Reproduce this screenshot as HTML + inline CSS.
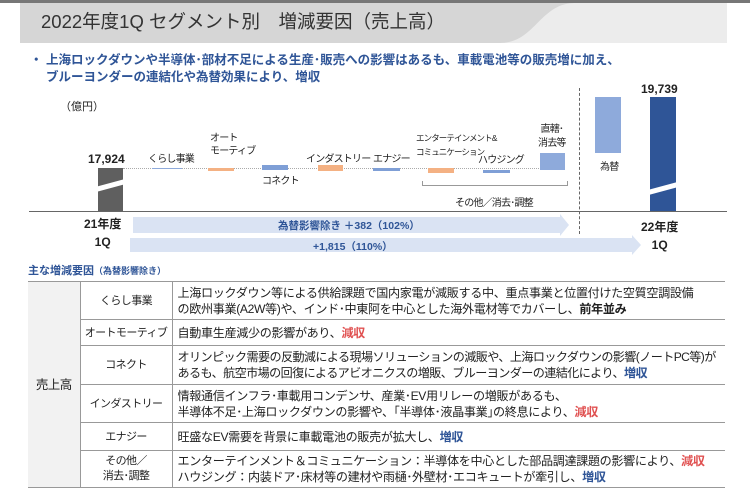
<!DOCTYPE html>
<html><head><meta charset="utf-8"><style>
*{margin:0;padding:0;box-sizing:border-box}
body{width:750px;height:498px;background:#fff;position:relative;overflow:hidden;font-family:"Liberation Sans","Noto Sans CJK JP",sans-serif;color:#222}
.a{position:absolute;white-space:nowrap}
.b{position:absolute}
.l{font-size:10px;letter-spacing:-0.8px}
table{position:absolute;left:28px;top:281px;width:697px;border-collapse:collapse;table-layout:fixed;font-size:12.1px;letter-spacing:-0.35px}
td{border-top:1px solid #999;border-bottom:1px solid #999;padding:0 0 0 5px;line-height:16px;white-space:nowrap;overflow:hidden}
td.n{text-align:center;border-right:1px solid #999;padding:0;font-size:11px;letter-spacing:-0.6px}
.r{color:#e05050;font-weight:bold}.u{color:#2f5597;font-weight:bold}
</style></head><body>
<div class="b" style="left:0;top:0;width:750px;height:3px;background:#777"></div>
<svg class="b" style="left:20px;top:3px" width="707" height="40"><rect width="707" height="40" fill="#ececec"/><path d="M0 0 H555 C520 0 515 40 480 40 H0 Z" fill="#d6d6d6"/></svg>
<div class="a" style="left:41px;top:8px;font-size:18.5px;color:#333">2022年度1Q セグメント別　増減要因（売上高）</div>
<div class="a" style="left:30px;top:52px;font-size:12.5px;font-weight:bold;color:#2f5597;line-height:17px">・ 上海ロックダウンや半導体･部材不足による生産･販売への影響はあるも、車載電池等の販売増に加え、<br>　 ブルーヨンダーの連結化や為替効果により、増収</div>
<div class="a" style="left:60px;top:98px;font-size:11px">（億円）</div>
<div class="b" style="left:29px;top:211px;width:698px;height:1px;background:#666"></div>
<div class="b" style="left:123px;top:168px;width:440px;border-top:1px dotted #aaa"></div>
<div class="b" style="left:98px;top:168px;width:25px;height:43px;background:#5f5f5f"></div>
<div class="b" style="left:93px;top:183px;width:35px;height:5px;background:#fff;transform:rotate(-15deg)"></div>
<div class="a" style="left:88px;top:152px;font-size:12px;font-weight:bold">17,924</div>
<div class="a l" style="left:148px;top:150px">くらし事業</div>
<div class="b" style="left:152px;top:168px;width:30px;height:1px;background:#8eaadb"></div>
<div class="a l" style="left:210px;top:132px;line-height:13px">オート<br>モーティブ</div>
<div class="b" style="left:208px;top:168px;width:26px;height:3px;background:#f4b183"></div>
<div class="b" style="left:262px;top:165px;width:26px;height:5px;background:#7f9fd6"></div>
<div class="a l" style="left:262px;top:172px">コネクト</div>
<div class="a l" style="left:306px;top:150px">インダストリー</div>
<div class="b" style="left:318px;top:165px;width:25px;height:6px;background:#f4b183"></div>
<div class="a l" style="left:373px;top:150px">エナジー</div>
<div class="b" style="left:373px;top:168px;width:27px;height:3px;background:#7f9fd6"></div>
<div class="a" style="left:416px;top:131px;font-size:8.5px;letter-spacing:-0.9px;line-height:14px">エンターテインメント&amp;<br>コミュニケーション</div>
<div class="b" style="left:428px;top:168px;width:26px;height:5px;background:#f4b183"></div>
<div class="a l" style="left:478px;top:151px">ハウジング</div>
<div class="b" style="left:483px;top:170px;width:27px;height:3px;background:#7f9fd6"></div>
<div class="a l" style="left:538px;top:123px;line-height:14px;text-align:center">直轄･<br>消去等</div>
<div class="b" style="left:540px;top:153px;width:25px;height:17px;background:#8eaadb"></div>
<div class="b" style="left:422px;top:181px;width:146px;height:5px;border:1px solid #999;border-top:none"></div>
<div class="a l" style="left:455px;top:194px">その他／消去･調整</div>
<div class="b" style="left:579px;top:88px;height:146px;border-left:1px dashed #666"></div>
<div class="b" style="left:595px;top:97px;width:26px;height:56px;background:#8eaadb"></div>
<div class="a l" style="left:600px;top:158px">為替</div>
<div class="b" style="left:650px;top:97px;width:26px;height:114px;background:#2f5597"></div>
<div class="b" style="left:645px;top:186px;width:36px;height:5px;background:#fff;transform:rotate(-15deg)"></div>
<div class="a" style="left:641px;top:82px;font-size:12px;font-weight:bold">19,739</div>
<div class="a" style="left:84px;top:215px;font-size:12px;font-weight:bold;line-height:18px;text-align:center">21年度<br>1Q</div>
<div class="a" style="left:641px;top:218px;font-size:12px;font-weight:bold;line-height:18px;text-align:center">22年度<br>1Q</div>
<svg class="b" style="left:130px;top:213px" width="520" height="42"><polygon points="3,4 430,4 430,1 439,12 430,23 430,20 3,20" fill="#dae3f3"/><polygon points="0,25 502,25 502,22 511,32 502,42 502,39 0,39" fill="#dae3f3"/></svg>
<div class="a" style="left:278px;top:218px;font-size:10.5px;font-weight:bold;color:#2f5597">為替影響除き ＋382（102%）</div>
<div class="a" style="left:313px;top:239px;font-size:10.5px;font-weight:bold;color:#2f5597">+1,815（110%）</div>
<div class="a" style="left:28px;top:262px;font-size:11px;font-weight:bold;color:#2f5597">主な増減要因<span style="font-size:9px">（為替影響除き）</span></div>
<table>
<colgroup><col style="width:52px"><col style="width:92px"><col></colgroup>
<tr style="height:38px"><td class="n" rowspan="6" style="background:#f2f2f2;font-size:12.5px">売上高</td><td class="n">くらし事業</td><td>上海ロックダウン等による供給課題で国内家電が減販する中、重点事業と位置付けた空質空調設備<br>の欧州事業(A2W等)や、インド･中東阿を中心とした海外電材等でカバーし、<b>前年並み</b></td></tr>
<tr style="height:26px"><td class="n">オートモーティブ</td><td>自動車生産減少の影響があり、<span class="r">減収</span></td></tr>
<tr style="height:39px"><td class="n">コネクト</td><td style="letter-spacing:-0.6px">オリンピック需要の反動減による現場ソリューションの減販や、上海ロックダウンの影響(ノートPC等)が<br>あるも、航空市場の回復によるアビオニクスの増販、ブルーヨンダーの連結化により、<span class="u">増収</span></td></tr>
<tr style="height:38px"><td class="n">インダストリー</td><td>情報通信インフラ･車載用コンデンサ、産業･EV用リレーの増販があるも、<br>半導体不足･上海ロックダウンの影響や、｢半導体･液晶事業｣の終息により、<span class="r">減収</span></td></tr>
<tr style="height:28px"><td class="n">エナジー</td><td>旺盛なEV需要を背景に車載電池の販売が拡大し、<span class="u">増収</span></td></tr>
<tr style="height:37px"><td class="n" style="line-height:15px">その他／<br>消去･調整</td><td>エンターテインメント＆コミュニケーション：半導体を中心とした部品調達課題の影響により、<span class="r">減収</span><br>ハウジング：内装ドア･床材等の建材や雨樋･外壁材･エコキュートが牽引し、<span class="u">増収</span></td></tr>
</table>
</body></html>
